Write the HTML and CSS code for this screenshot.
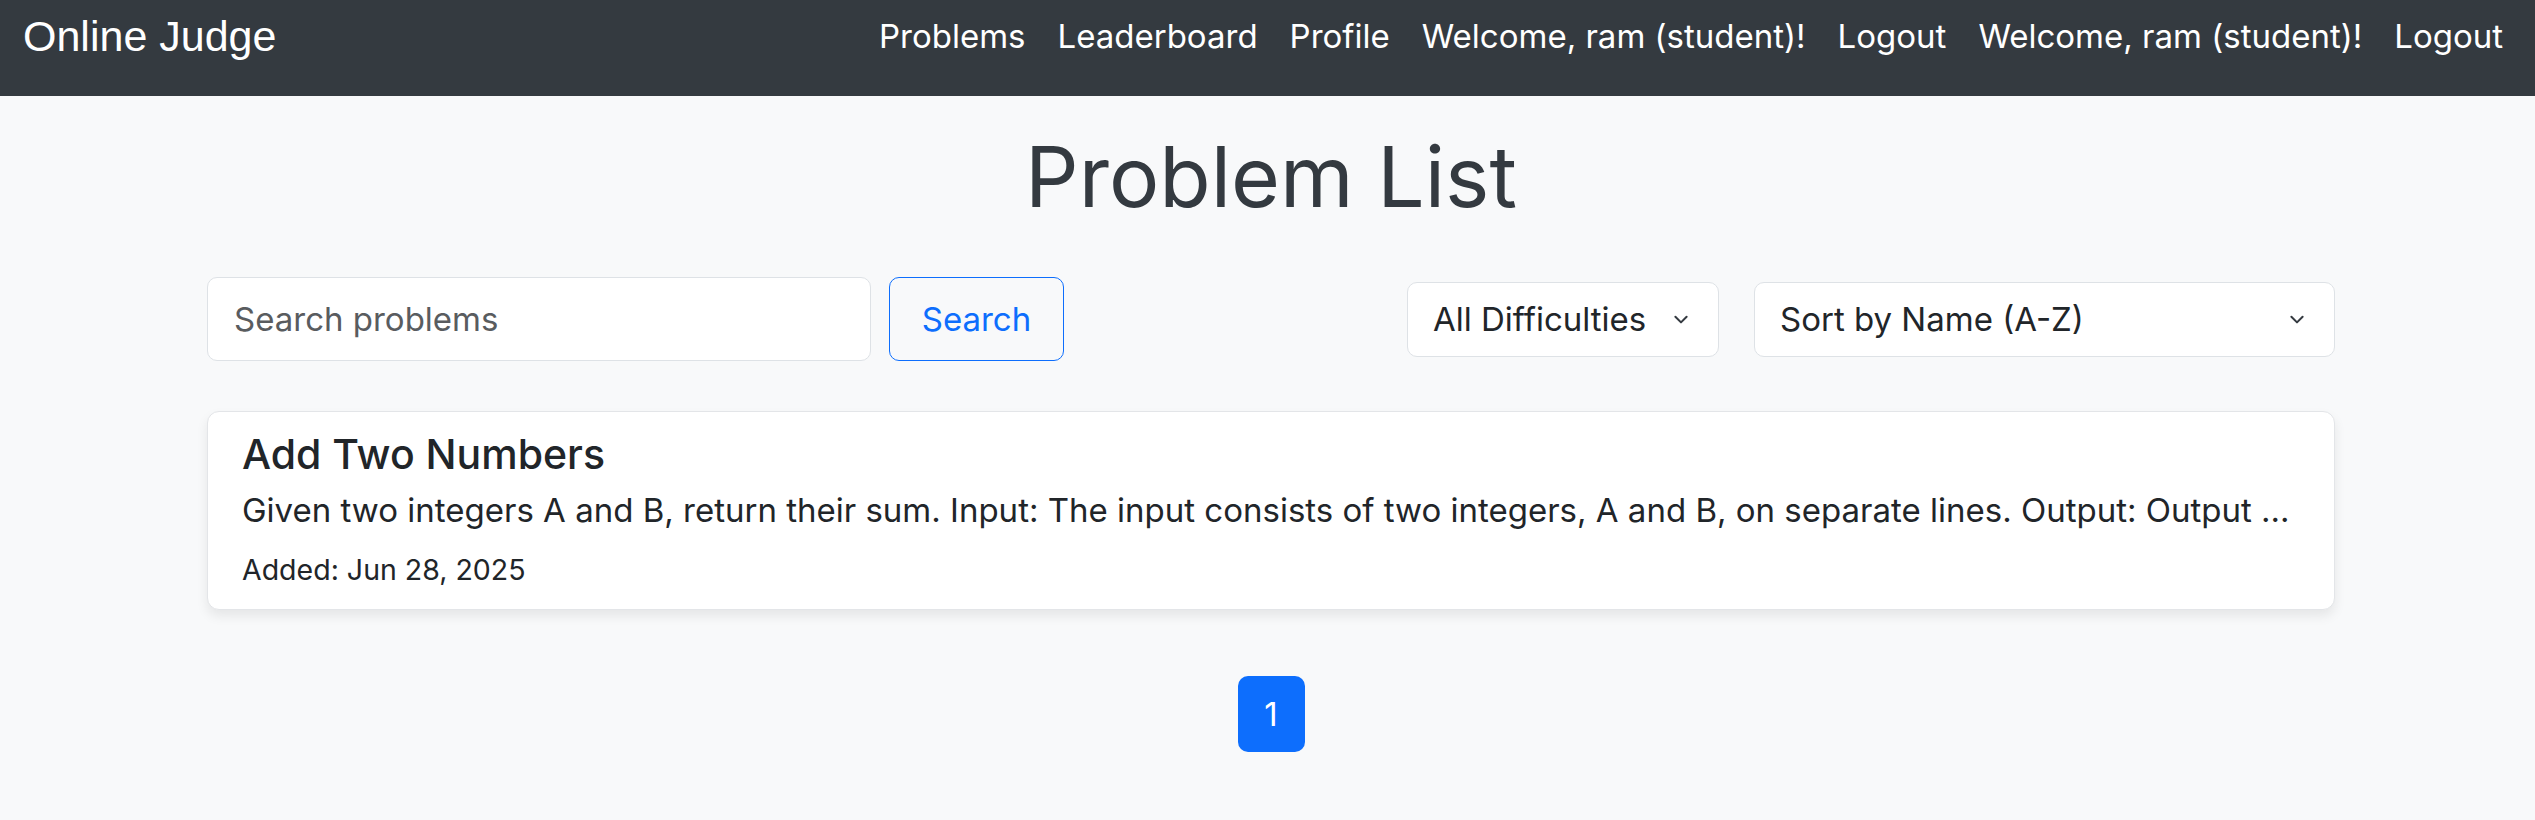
FILE: index.html
```html
<!DOCTYPE html>
<html lang="en">
<head>
<meta charset="utf-8">
<title>Online Judge</title>
<link rel="stylesheet" href="styles.css">
</head>
<body>
<nav class="navbar">
  <a class="brand" href="#">Online Judge</a>
  <ul class="nav-links">
    <li><a href="#">Problems</a></li>
    <li><a href="#">Leaderboard</a></li>
    <li><a href="#">Profile</a></li>
    <li><span>Welcome, ram (student)!</span></li>
    <li><a href="#">Logout</a></li>
    <li><span>Welcome, ram (student)!</span></li>
    <li><a href="#">Logout</a></li>
  </ul>
</nav>
<main class="container">
  <h1 class="page-title">Problem List</h1>
  <div class="controls">
    <form class="search-group">
      <input class="search-input" type="text" placeholder="Search problems">
      <button class="search-btn" type="button">Search</button>
    </form>
    <div class="filter-group">
      <div class="select select-difficulty">
        <span>All Difficulties</span>
        <svg class="chevron" viewBox="0 0 16 16" width="18" height="18"><path d="M3 6l5 5 5-5" fill="none" stroke="#343a40" stroke-width="1.8" stroke-linecap="round" stroke-linejoin="round"/></svg>
      </div>
      <div class="select select-sort">
        <span>Sort by Name (A-Z)</span>
        <svg class="chevron" viewBox="0 0 16 16" width="18" height="18"><path d="M3 6l5 5 5-5" fill="none" stroke="#343a40" stroke-width="1.8" stroke-linecap="round" stroke-linejoin="round"/></svg>
      </div>
    </div>
  </div>
  <div class="card">
    <h2 class="card-title">Add Two Numbers</h2>
    <p class="card-text">Given two integers A and B, return their sum. Input: The input consists of two integers, A and B, on separate lines. Output: Output ...</p>
    <p class="card-date">Added: Jun 28, 2025</p>
  </div>
  <div class="pagination">
    <span class="page active">1</span>
  </div>
</main>
</body>
</html>
```
FILE: styles.css
```css
* { box-sizing: border-box; }
html, body { margin: 0; padding: 0; }
body {
  background: #f8f9fa;
  font-family: Inter, "Noto Sans", sans-serif;
  color: #212529;
  height: 820px;
  overflow: hidden;
}
.navbar {
  height: 96px;
  background: #343a40;
  display: flex;
  align-items: flex-start;
  justify-content: space-between;
  padding: 12px 16px 0 23px;
}
.brand {
  font-family: "Liberation Sans", Arial, sans-serif;
  font-size: 43px;
  line-height: 48px;
  color: #fff;
  text-decoration: none;
}
.nav-links {
  list-style: none;
  margin: 0;
  padding: 0;
  display: flex;
}
.nav-links li a, .nav-links li span {
  display: block;
  padding: 0 16px;
  font-size: 33px;
  line-height: 48px;
  color: #fff;
  text-decoration: none;
}
.container {
  width: 2128px;
  margin-left: 207px;
}
.page-title {
  margin: 0 0 45px;
  padding-top: 26px;
  text-align: center;
  font-size: 84px;
  font-weight: 400;
  color: #343a40;
  line-height: 110px;
}
.controls {
  display: flex;
  justify-content: space-between;
  align-items: center;
}
.search-group {
  display: flex;
  gap: 18px;
  margin: 0;
}
.search-input {
  width: 664px;
  height: 84px;
  border: 1px solid #dee2e6;
  border-radius: 10px;
  background: #fff;
  padding: 0 26px;
  font-family: Inter, sans-serif;
  font-size: 33px;
  color: #212529;
}
.search-input::placeholder { color: #595c5f; }
.search-btn {
  width: 175px;
  height: 84px;
  border: 1.5px solid #0d6efd;
  border-radius: 10px;
  background: transparent;
  color: #0d6efd;
  font-family: Inter, sans-serif;
  font-size: 33px;
}
.filter-group {
  display: flex;
  gap: 35px;
}
.select {
  height: 75px;
  background: #fff;
  border: 1px solid #dee2e6;
  border-radius: 10px;
  display: flex;
  align-items: center;
  justify-content: space-between;
  padding: 0 28px 0 25px;
  font-size: 33px;
  color: #212529;
}
.select-difficulty { width: 312px; }
.select-sort { width: 581px; }
.chevron { width: 18px; height: 18px; }
.card {
  margin-top: 50px;
  height: 199px;
  background: #fff;
  border: 1px solid #e3e5e8;
  border-radius: 12px;
  box-shadow: 0 6px 12px rgba(0,0,0,0.08);
  padding: 14px 34px;
}
.card-title {
  margin: 0;
  font-size: 41px;
  font-weight: 500;
  line-height: 56px;
}
.card-text {
  margin: 4px 0 0;
  font-size: 33px;
  line-height: 48px;
}
.card-date {
  margin: 16px 0 0;
  font-size: 28.5px;
  line-height: 40px;
}
.pagination {
  display: flex;
  justify-content: center;
  margin-top: 66px;
}
.page {
  width: 67px;
  height: 76px;
  border-radius: 10px;
  display: flex;
  align-items: center;
  justify-content: center;
  font-size: 33px;
}
.page.active {
  background: #0d6efd;
  color: #fff;
}
```
